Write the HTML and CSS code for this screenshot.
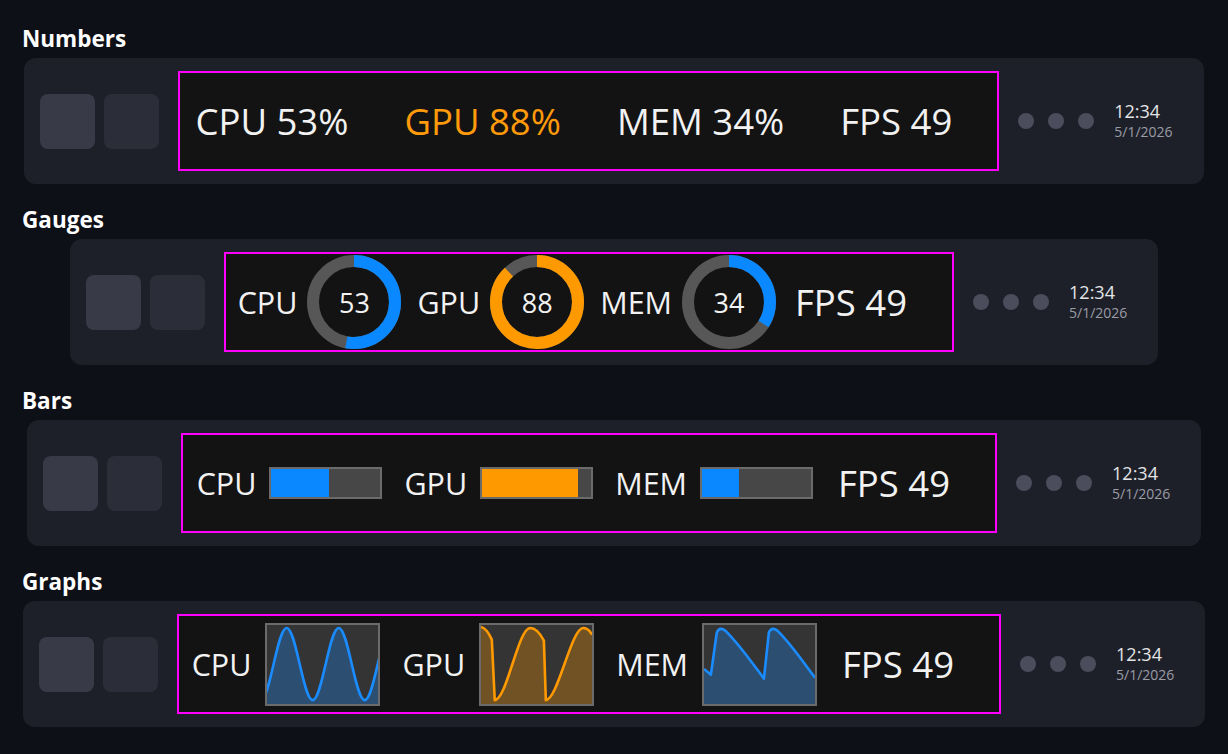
FILE: index.html
```html
<!DOCTYPE html>
<html lang="en">
<head>
<meta charset="utf-8">
<title>Overlay styles</title>
<link rel="stylesheet" href="styles.css">
</head>
<body>

<section class="sec">
  <h2 class="sec-title">Numbers</h2>
  <div class="taskbar">
    <div class="apps"><span class="app app-a"></span><span class="app app-b"></span></div>
    <div class="overlay ov-numbers">
      <span class="num">CPU 53%</span>
      <span class="num num-gpu">GPU 88%</span>
      <span class="num">MEM 34%</span>
      <span class="num">FPS 49</span>
    </div>
    <div class="dots"><span class="dot"></span><span class="dot"></span><span class="dot"></span></div>
    <div class="clock"><div class="time">12:34</div><div class="date">5/1/2026</div></div>
  </div>
</section>

<section class="sec">
  <h2 class="sec-title">Gauges</h2>
  <div class="taskbar">
    <div class="apps"><span class="app app-a"></span><span class="app app-b"></span></div>
    <div class="overlay ov-gauges">
      <div class="metric">
        <span class="label">CPU</span>
        <div class="gauge">
          <svg viewBox="0 0 94 94" width="94" height="94">
            <circle class="g-track" cx="47" cy="47" r="41"/>
            <circle class="g-val g-blue" cx="47" cy="47" r="41" pathLength="100" stroke-dasharray="53 100" transform="rotate(-90 47 47)"/>
          </svg>
          <span class="g-num">53</span>
        </div>
      </div>
      <div class="metric">
        <span class="label">GPU</span>
        <div class="gauge">
          <svg viewBox="0 0 94 94" width="94" height="94">
            <circle class="g-track" cx="47" cy="47" r="41"/>
            <circle class="g-val g-orange" cx="47" cy="47" r="41" pathLength="100" stroke-dasharray="88 100" transform="rotate(-90 47 47)"/>
          </svg>
          <span class="g-num">88</span>
        </div>
      </div>
      <div class="metric">
        <span class="label">MEM</span>
        <div class="gauge">
          <svg viewBox="0 0 94 94" width="94" height="94">
            <circle class="g-track" cx="47" cy="47" r="41"/>
            <circle class="g-val g-blue" cx="47" cy="47" r="41" pathLength="100" stroke-dasharray="34 100" transform="rotate(-90 47 47)"/>
          </svg>
          <span class="g-num">34</span>
        </div>
      </div>
      <span class="fps">FPS 49</span>
    </div>
    <div class="dots"><span class="dot"></span><span class="dot"></span><span class="dot"></span></div>
    <div class="clock"><div class="time">12:34</div><div class="date">5/1/2026</div></div>
  </div>
</section>

<section class="sec">
  <h2 class="sec-title">Bars</h2>
  <div class="taskbar">
    <div class="apps"><span class="app app-a"></span><span class="app app-b"></span></div>
    <div class="overlay ov-bars">
      <div class="metric">
        <span class="label">CPU</span>
        <div class="hbar"><div class="hbar-fill fill-blue" style="width:53%"></div></div>
      </div>
      <div class="metric">
        <span class="label">GPU</span>
        <div class="hbar"><div class="hbar-fill fill-orange" style="width:88%"></div></div>
      </div>
      <div class="metric">
        <span class="label">MEM</span>
        <div class="hbar"><div class="hbar-fill fill-blue" style="width:34%"></div></div>
      </div>
      <span class="fps">FPS 49</span>
    </div>
    <div class="dots"><span class="dot"></span><span class="dot"></span><span class="dot"></span></div>
    <div class="clock"><div class="time">12:34</div><div class="date">5/1/2026</div></div>
  </div>
</section>

<section class="sec">
  <h2 class="sec-title">Graphs</h2>
  <div class="taskbar">
    <div class="apps"><span class="app app-a"></span><span class="app app-b"></span></div>
    <div class="overlay ov-graphs">
      <div class="metric">
        <span class="label">CPU</span>
        <div class="graph">
          <svg viewBox="0 0 113 81" preserveAspectRatio="none">
            <path class="area-blue" d="M-6.5,77 C3.13,77 10.37,3 20,3 C29.63,3 36.87,77 46.5,77 C56.13,77 63.37,3 73,3 C82.63,3 89.87,77 99.5,77 C109.13,77 116.37,3 126,3 L126,82 L-6.5,82 Z"/>
            <path class="line-blue" d="M-6.5,77 C3.13,77 10.37,3 20,3 C29.63,3 36.87,77 46.5,77 C56.13,77 63.37,3 73,3 C82.63,3 89.87,77 99.5,77 C109.13,77 116.37,3 126,3"/>
          </svg>
        </div>
      </div>
      <div class="metric">
        <span class="label">GPU</span>
        <div class="graph">
          <svg viewBox="0 0 113 81" preserveAspectRatio="none">
            <path class="area-orange" d="M0,2 C4,3 8,8 11,15 L14,77 C26,77 38,3 50,3 C56,3 60,8 64,16 L66,77 C78,77 92,3 104,3 C108,3 111,6 113,10 L113,82 L0,82 Z"/>
            <path class="line-orange" d="M0,2 C4,3 8,8 11,15 L14,77 C26,77 38,3 50,3 C56,3 60,8 64,16 L66,77 C78,77 92,3 104,3 C108,3 111,6 113,10"/>
          </svg>
        </div>
      </div>
      <div class="metric">
        <span class="label">MEM</span>
        <div class="graph">
          <svg viewBox="0 0 113 81" preserveAspectRatio="none">
            <path class="area-blue" d="M0,45 L7,51 L13,8 C15,3 18,3 22,6 C36,20 50,40 61,55 L66,8 C68,3 71,3 75,6 C89,20 101,38 113,54 L113,82 L0,82 Z"/>
            <path class="line-blue" d="M0,45 L7,51 L13,8 C15,3 18,3 22,6 C36,20 50,40 61,55 L66,8 C68,3 71,3 75,6 C89,20 101,38 113,54"/>
          </svg>
        </div>
      </div>
      <span class="fps">FPS 49</span>
    </div>
    <div class="dots"><span class="dot"></span><span class="dot"></span><span class="dot"></span></div>
    <div class="clock"><div class="time">12:34</div><div class="date">5/1/2026</div></div>
  </div>
</section>

</body>
</html>
```

FILE: styles.css
```css
* { box-sizing: border-box; }

html, body {
  margin: 0;
  background: #0e1017;
}

body {
  padding-top: 24px;
  font-family: "Open Sans", "Noto Sans", "DejaVu Sans", sans-serif;
  color: #f0f0f0;
}

.sec {
  display: flex;
  flex-direction: column;
  margin-bottom: 21px;
}

.sec-title {
  margin: 0 0 4px;
  padding-left: 22px;
  font-size: 22.5px;
  line-height: 30px;
  font-weight: 700;
  color: #ffffff;
}

.taskbar {
  align-self: center;
  display: flex;
  align-items: center;
  gap: 19px;
  padding: 13px 31px 13px 16px;
  background: #1e2029;
  border-radius: 12px;
}

.apps {
  display: flex;
  gap: 9px;
}

.app {
  display: block;
  width: 55px;
  height: 55px;
  border-radius: 8px;
}

.app-a { background: #383a47; }
.app-b { background: #2b2d38; }

.overlay {
  height: 100px;
  display: flex;
  align-items: center;
  border: 2px solid #ff00ff;
  background: #131313;
  padding: 0 45px 0 14px;
  white-space: nowrap;
}

.ov-numbers { gap: 56px; padding-left: 15px; }
.ov-gauges { gap: 16px; padding-left: 12px; }
.ov-bars { gap: 22px; padding-left: 14px; }
.ov-graphs { gap: 22px; padding-left: 13px; }

.num {
  font-size: 36.5px;
  line-height: 1;
  color: #f2f2f2;
}

.num-gpu { color: #ff9a0a; }

.metric {
  display: flex;
  align-items: center;
  gap: 10px;
}

.ov-bars .metric { gap: 13px; }
.ov-graphs .metric { gap: 14px; }

.label {
  font-size: 30.5px;
  line-height: 1;
  color: #f2f2f2;
}

.fps {
  font-size: 36.5px;
  line-height: 1;
  color: #f2f2f2;
  margin-left: 3px;
}

/* gauges */
.gauge {
  position: relative;
  width: 94px;
  height: 94px;
}

.gauge svg {
  display: block;
}

.g-track {
  fill: none;
  stroke: #575757;
  stroke-width: 12;
}

.g-val {
  fill: none;
  stroke-width: 12;
}

.g-blue { stroke: #0a88ff; }
.g-orange { stroke: #ff9900; }

.g-num {
  position: absolute;
  inset: 0;
  display: flex;
  align-items: center;
  justify-content: center;
  font-size: 27px;
  color: #f2f2f2;
}

/* bars */
.hbar {
  width: 113px;
  height: 32px;
  border: 2px solid #6b6b6b;
  background: #474747;
}

.hbar-fill {
  height: 100%;
}

.fill-blue { background: #0a88ff; }
.fill-orange { background: #ff9900; }

/* graphs */
.graph {
  width: 115px;
  height: 83px;
  border: 2px solid #6b6b6b;
  background: #343434;
}

.graph svg {
  display: block;
  width: 111px;
  height: 79px;
}

.area-blue { fill: rgba(26, 140, 255, 0.3); }
.area-orange { fill: rgba(255, 153, 0, 0.3); }

.line-blue, .line-orange {
  fill: none;
  stroke-width: 2.6;
  stroke-linejoin: round;
  vector-effect: non-scaling-stroke;
}

.line-blue { stroke: #1a8cff; }
.line-orange { stroke: #ff9900; }

/* tray */
.dots {
  display: flex;
  gap: 14px;
}

.dot {
  display: block;
  width: 16px;
  height: 16px;
  border-radius: 50%;
  background: #4b4d5c;
}

.clock {
  display: flex;
  flex-direction: column;
  padding-left: 1px;
}

.time {
  font-size: 18px;
  line-height: 21px;
  color: #e4e4e6;
}

.date {
  font-size: 14px;
  line-height: 19px;
  color: #9a9ca6;
}
```
